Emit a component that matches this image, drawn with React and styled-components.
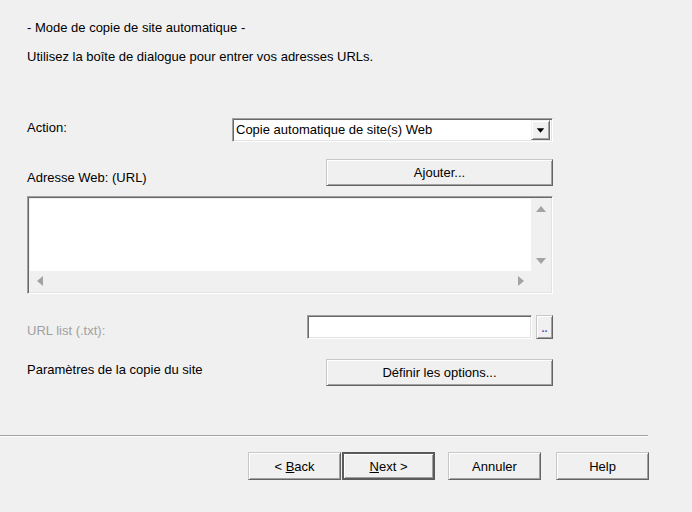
import React from "react";
import styled, { createGlobalStyle, css } from "styled-components";

const GlobalStyle = createGlobalStyle`
  html, body { margin: 0; padding: 0; background: #f0f0f0; }
  body {
    font-family: "Liberation Sans", Arial, sans-serif;
    font-size: 13px;
    color: #000;
  }
`;

const Page = styled.div`
  width: 692px;
  height: 512px;
  display: flex;
  flex-direction: column;
  background: #f0f0f0;
  overflow: hidden;
`;

const Content = styled.div`
  width: 526px;
  padding: 20px 0 0 27px;
  display: flex;
  flex-direction: column;
`;

const Text = styled.div`
  line-height: 16px;
  height: 16px;
  white-space: nowrap;
  margin-top: ${(p) => p.$mt || 0}px;
  color: ${(p) => (p.$disabled ? "#a0a0a0" : "#000")};
`;

const Row = styled.div`
  display: flex;
  justify-content: space-between;
  align-items: ${(p) => p.$align || "center"};
  margin-top: ${(p) => p.$mt || 0}px;
`;

const Label = styled.span`
  line-height: 16px;
  white-space: nowrap;
  color: ${(p) => (p.$disabled ? "#a0a0a0" : "#000")};
  margin-bottom: ${(p) => p.$mb || 0}px;
`;

const sunken = css`
  box-sizing: border-box;
  border: 1px solid;
  border-color: #a0a0a0 #ffffff #ffffff #a0a0a0;
  box-shadow: inset 1px 1px 0 #696969, inset -1px -1px 0 #e3e3e3;
`;

const Combo = styled.div`
  ${sunken};
  width: 321px;
  height: 24px;
  background: #fff;
  display: flex;
  align-items: center;
  padding: 2px 2px 2px 3px;
`;

const ComboText = styled.span`
  flex: 1;
  line-height: 16px;
  white-space: nowrap;
`;

const ComboArrow = styled.div`
  box-sizing: border-box;
  width: 19px;
  height: 20px;
  background: #f0f0f0;
  border: 1px solid;
  border-color: #f0f0f0 #696969 #696969 #f0f0f0;
  box-shadow: inset 1px 1px 0 #fff, inset -1px -1px 0 #a0a0a0;
  display: flex;
  align-items: center;
  justify-content: center;
`;

const Button = styled.button`
  box-sizing: border-box;
  width: ${(p) => p.$w || 227}px;
  height: ${(p) => p.$h || 27}px;
  margin: 0 0 0 ${(p) => p.$ml || 0}px;
  padding: 0;
  background: #f0f0f0;
  font-family: "Liberation Sans", Arial, sans-serif;
  font-size: 13px;
  color: #000;
  border: 1px solid;
  border-color: #c8c8c8 #646464 #646464 #c8c8c8;
  box-shadow: inset 1px 1px 0 #fff, inset -1px -1px 0 #a0a0a0;
  display: flex;
  align-items: center;
  justify-content: center;
  ${(p) =>
    p.$default &&
    css`
      border: 2px solid #5a5a5a;
      box-shadow: inset 1px 1px 0 #fff, inset -1px -1px 0 #a0a0a0;
    `}
`;

const U = styled.span`
  text-decoration: underline;
`;

const ListBox = styled.div`
  ${sunken};
  margin-top: 10px;
  width: 526px;
  height: 98px;
  padding: 2px 1px 2px 2px;
  display: grid;
  grid-template-columns: 1fr 20px;
  grid-template-rows: 1fr 20px;
`;

const ListArea = styled.div`
  background: #fff;
`;

const VScroll = styled.div`
  background: #f0f0f0;
  display: flex;
  flex-direction: column;
  justify-content: space-between;
`;

const HScroll = styled.div`
  background: #f0f0f0;
  display: flex;
  justify-content: space-between;
`;

const Corner = styled.div`
  background: #f0f0f0;
`;

const ArrowCell = styled.div`
  width: 20px;
  height: 20px;
  display: flex;
  align-items: center;
  justify-content: center;
`;

const TextBox = styled.div`
  ${sunken};
  width: 225px;
  height: 24px;
  background: #fff;
`;

const FileGroup = styled.div`
  display: flex;
  align-items: flex-start;
  gap: 4px;
`;

const DotsButton = styled(Button)`
  width: 17px;
  height: 24px;
  font-size: 11px;
  font-weight: bold;
  color: #5050b0;
  align-items: flex-end;
  padding-bottom: 5px;
  line-height: 10px;
`;

const Separator = styled.div`
  margin-top: 49px;
  width: 648px;
  border-top: 1px solid #a0a0a0;
  border-bottom: 1px solid #ffffff;
`;

const Footer = styled.div`
  width: 649px;
  margin-top: 15px;
  display: flex;
  justify-content: flex-end;
`;

const Tri = ({ dir, color = "#a3a3a3", size = 12 }) => {
  const pts = {
    up: "1,9 6,3 11,9",
    down: "1,3 6,9 11,3",
    left: "9,1 3,6 9,11",
    right: "3,1 9,6 3,11",
  }[dir];
  return (
    <svg width={size} height={size} viewBox="0 0 12 12">
      <polygon points={pts} fill={color} />
    </svg>
  );
};

export default function App() {
  return (
    <>
      <GlobalStyle />
      <Page>
        <Content>
          <Text>- Mode de copie de site automatique -</Text>
          <Text $mt={13}>Utilisez la boîte de dialogue pour entrer vos adresses URLs.</Text>

          <Row $mt={53}>
            <Label $mb={5}>Action:</Label>
            <Combo>
              <ComboText>Copie automatique de site(s) Web</ComboText>
              <ComboArrow>
                <Tri dir="down" color="#000" size={9} />
              </ComboArrow>
            </Combo>
          </Row>

          <Row $mt={17} $align="flex-end">
            <Label>Adresse Web: (URL)</Label>
            <Button>Ajouter...</Button>
          </Row>

          <ListBox>
            <ListArea />
            <VScroll>
              <ArrowCell>
                <Tri dir="up" />
              </ArrowCell>
              <ArrowCell>
                <Tri dir="down" />
              </ArrowCell>
            </VScroll>
            <HScroll>
              <ArrowCell>
                <Tri dir="left" />
              </ArrowCell>
              <ArrowCell>
                <Tri dir="right" />
              </ArrowCell>
            </HScroll>
            <Corner />
          </ListBox>

          <Row $mt={21} $align="flex-end">
            <Label $disabled>URL list (.txt):</Label>
            <FileGroup>
              <TextBox />
              <DotsButton>..</DotsButton>
            </FileGroup>
          </Row>

          <Row $mt={20}>
            <Label $mb={6}>Paramètres de la copie du site</Label>
            <Button>Définir les options...</Button>
          </Row>
        </Content>

        <Separator />

        <Footer>
          <Button $w={93} $h={28}>
            &lt;&nbsp;<U>B</U>ack
          </Button>
          <Button $w={93} $h={28} $ml={1} $default>
            <U>N</U>ext &gt;
          </Button>
          <Button $w={93} $h={28} $ml={13}>
            Annuler
          </Button>
          <Button $w={93} $h={28} $ml={15}>
            Help
          </Button>
        </Footer>
      </Page>
    </>
  );
}
